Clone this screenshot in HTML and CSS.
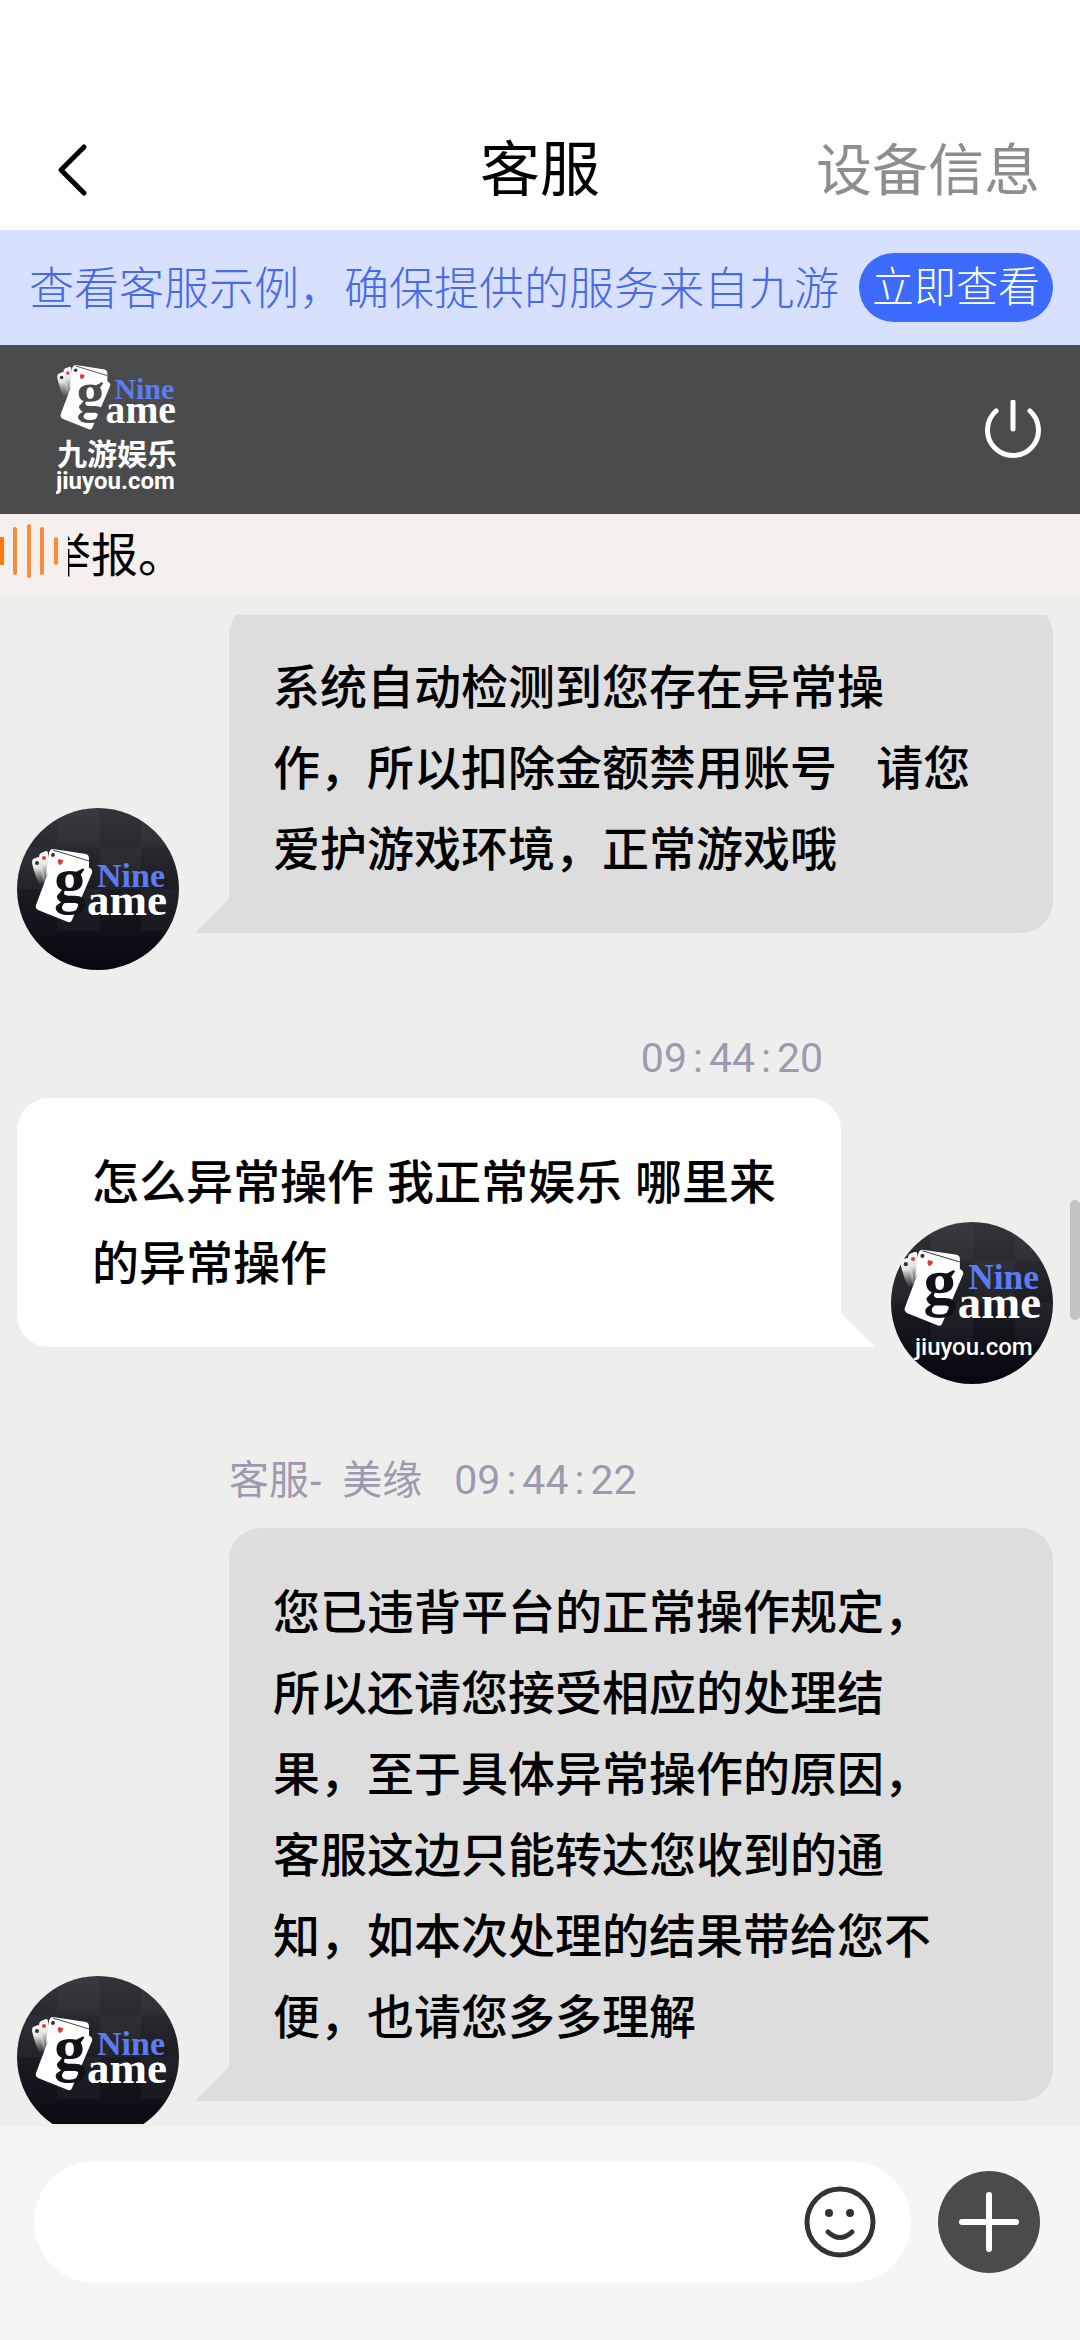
FILE: index.html
```html
<!DOCTYPE html>
<html lang="zh-CN">
<head>
<meta charset="utf-8">
<meta name="viewport" content="width=device-width, initial-scale=1">
<title>客服</title>
<link rel="stylesheet" href="styles.css">
</head>
<body>
<svg class="defs" aria-hidden="true">
  <defs>
    <linearGradient id="night" x1="0" y1="0" x2="0" y2="1">
      <stop offset="0" stop-color="#34353a"/>
      <stop offset="0.5" stop-color="#1c1d22"/>
      <stop offset="1" stop-color="#050610"/>
    </linearGradient>
    <linearGradient id="fade" x1="0" y1="0" x2="0" y2="1">
      <stop offset="0" stop-color="#fff"/>
      <stop offset="0.4" stop-color="#e4e4e4"/>
      <stop offset="1" stop-color="#999" stop-opacity="0.1"/>
    </linearGradient>
    <clipPath id="round"><circle cx="81" cy="81" r="81"/></clipPath>
    <symbol id="tiles" viewBox="0 0 162 162">
      <g clip-path="url(#round)">
        <rect width="162" height="162" fill="url(#night)"/>
        <g fill="#fff" fill-opacity="0.03">
          <path d="M40 0h43v39H40zM124 0h38v39h-38zM0 39h40v42H0zM83 39h41v42H83zM40 81h43v42H40zM124 81h38v42h-38z"/>
        </g>
      </g>
    </symbol>
    <symbol id="cards" overflow="visible">
      <path d="M16 51l5-2q2 0 2 2l6 22-6 4q-5-8-8-22 0-3 1-4z" fill="url(#fade)"/>
      <path d="M24 45l5-2q2 0 2 2l3 18-6 15q-4-10-6-29 0-3 2-4z" fill="url(#fade)"/>
      <circle cx="20" cy="55" r="2" fill="#333"/>
      <circle cx="27" cy="50" r="2" fill="#e23b3b"/>
      <path d="M36 41q-3 0-4 4l-3 23 9-15 34 7 0-10q0-3-3-4z" fill="#fff"/>
      <path d="M36 42l36 11" stroke="#444" stroke-width="1"/>
      <circle cx="36" cy="47" r="2" fill="#333"/>
      <path d="M42 47l31 13q3 2 2 5L55 112q-1 3-4 2L21 102q-3-2-2-5L37 49q2-4 5-2z" fill="#fff"/>
      <path d="M41 52q2-2 3 0 2-1 2 1 0 3-4 4-2-3-1-5z" fill="#e23b3b"/>
    </symbol>
  </defs>
</svg>

<header class="topbar">
  <button class="back" type="button" aria-label="返回">
    <svg viewBox="0 0 40 60" fill="none" stroke="#000" stroke-width="5" stroke-linecap="round" stroke-linejoin="round"><path d="M34 6L11 29l23 23"/></svg>
  </button>
  <h1>客服</h1>
  <a class="device" href="#device">设备信息</a>
</header>

<section class="banner">
  <p>查看客服示例，确保提供的服务来自九游</p>
  <button class="check" type="button">立即查看</button>
</section>

<section class="brand">
  <svg class="logo" viewBox="0 0 122 134" role="img" aria-label="Nine game 九游娱乐">
    <g transform="translate(-12 -34) scale(0.88)">
      <use href="#cards"/>
      <text class="serif g-bar" x="37" y="93">g</text>
      <text class="serif nine" x="80" y="79">Nine</text>
      <text class="serif ame" x="70" y="107">ame</text>
    </g>
    <text class="cn" x="1" y="102">九游娱乐</text>
    <text class="site-bar" x="0" y="126">jiuyou.com</text>
  </svg>
  <button class="power" type="button" aria-label="结束会话">
    <svg viewBox="0 0 60 60" fill="none" stroke="#fff" stroke-width="5" stroke-linecap="round"><path d="M31 2v27M14 11a25.5 25.5 0 1 0 34 0"/></svg>
  </button>
</section>

<section class="notice">
  <svg class="wave" viewBox="0 0 68 84">
    <path d="M0 23h4v28H0z" fill="#ff7a0a"/>
    <path d="M15 15v44M29 12v50M42 15v44M56 25v24" stroke="#f78c3b" stroke-width="4" stroke-linecap="round"/>
  </svg>
  <div class="marquee"><span>举报。</span></div>
</section>

<main class="chat">
  <div class="messages">
    <article class="msg in first">
      <svg class="avatar" viewBox="0 0 162 162">
        <use href="#tiles"/><use href="#cards"/>
        <text class="serif g-dark" x="37" y="93">g</text>
        <text class="serif nine" x="80" y="79">Nine</text>
        <text class="serif ame" x="70" y="107">ame</text>
      </svg>
      <div class="bubble">系统自动检测到您存在异常操作，所以扣除金额禁用账号&nbsp;&nbsp; 请您爱护游戏环境，正常游戏哦</div>
    </article>

    <article class="msg out">
      <div class="meta"><time>09<i>:</i>44<i>:</i>20</time></div>
      <div class="bubble">怎么异常操作 我正常娱乐 哪里来的异常操作</div>
      <svg class="avatar" viewBox="0 0 162 162">
        <use href="#tiles"/>
        <g transform="translate(-6 -15) scale(1.04)">
          <use href="#cards"/>
          <text class="serif g-dark" x="37" y="93">g</text>
          <text class="serif nine" x="80" y="79">Nine</text>
          <text class="serif ame" x="70" y="107">ame</text>
        </g>
        <text class="site" x="24" y="133">jiuyou.com</text>
      </svg>
    </article>

    <article class="msg in">
      <div class="meta"><span>客服-</span><span class="agent">美缘</span><time>09<i>:</i>44<i>:</i>22</time></div>
      <svg class="avatar" viewBox="0 0 162 162">
        <use href="#tiles"/><use href="#cards"/>
        <text class="serif g-dark" x="37" y="93">g</text>
        <text class="serif nine" x="80" y="79">Nine</text>
        <text class="serif ame" x="70" y="107">ame</text>
      </svg>
      <div class="bubble">您已违背平台的正常操作规定，所以还请您接受相应的处理结果，至于具体异常操作的原因，客服这边只能转达您收到的通知，如本次处理的结果带给您不便，也请您多多理解</div>
    </article>
  </div>
  <div class="thumb"></div>
</main>

<form class="composer">
  <div class="field">
    <input type="text" aria-label="输入消息">
    <button class="emoji" type="button" aria-label="表情">
      <svg viewBox="0 0 72 72" fill="none" stroke="#333" stroke-width="5" stroke-linecap="round"><circle cx="36" cy="36" r="33"/><path d="M24 46q12 11 24 0"/><g fill="#333" stroke="none"><circle cx="25" cy="27" r="4"/><circle cx="46" cy="27" r="4"/></g></svg>
    </button>
  </div>
  <button class="plus" type="button" aria-label="更多">
    <svg viewBox="0 0 60 60" stroke="#fff" stroke-width="6" stroke-linecap="round"><path d="M30 3v54M3 30h54"/></svg>
  </button>
</form>
</body>
</html>
```
FILE: styles.css
```css
* { box-sizing: border-box; }

body {
  margin: 0;
  height: 100vh;
  display: flex;
  flex-direction: column;
  background: #eeeeec;
  color: #000;
  font-family: "Liberation Sans", "Noto Sans CJK SC", sans-serif;
}

button {
  border: 0;
  padding: 0;
  background: none;
  font-family: inherit;
  display: flex;
  align-items: center;
  justify-content: center;
}

svg { display: block; }
.defs { width: 0; height: 0; position: absolute; }

.topbar {
  display: grid;
  grid-template-columns: 1fr auto 1fr;
  align-items: center;
  height: 230px;
  padding: 112px 40px 0;
  background: #fff;
}
.back { width: 40px; height: 60px; margin-left: 10px; }
.back svg { width: 40px; height: 60px; }
h1 { margin: 0; font-size: 60px; line-height: 80px; font-weight: 400; }
.device {
  justify-self: end;
  font-size: 56px;
  line-height: 80px;
  color: #8e8e90;
  text-decoration: none;
}

.banner {
  display: flex;
  align-items: center;
  justify-content: space-between;
  height: 115px;
  padding: 0 27px 0 29px;
  background: #d8e0ff;
}
.banner p {
  margin: 0;
  padding-top: 4px;
  font-size: 45px;
  line-height: 60px;
  font-weight: 300;
  color: #466ae6;
  white-space: nowrap;
}
.check {
  width: 194px;
  height: 69px;
  border-radius: 35px;
  background: #3d6bff;
  color: #fff;
  font-size: 42px;
  line-height: 60px;
  font-weight: 300;
}

.brand {
  display: flex;
  align-items: center;
  justify-content: space-between;
  height: 169px;
  padding: 0 38px 0 56px;
  background: #4a4b4d;
}
.logo { width: 122px; height: 134px; }
.power, .power svg { width: 60px; height: 60px; }

.serif { font-family: "Liberation Serif", serif; font-weight: 700; }
.g-bar { font-size: 64px; fill: #4a4b4d; }
.g-dark { font-size: 64px; fill: #111217; }
.nine { font-size: 34px; fill: #5c7df2; }
.ame { font-size: 45px; fill: #fff; }
.cn { font-family: "Noto Sans CJK SC", sans-serif; font-size: 30px; font-weight: 700; fill: #fff; }
.site { font-family: Roboto, sans-serif; font-size: 24px; font-weight: 500; fill: #fff; }
.site-bar { font-family: Roboto, sans-serif; font-size: 24px; font-weight: 700; fill: #fff; }

.notice {
  display: flex;
  height: 84px;
  background: #f5f0ee;
}
.wave { width: 68px; height: 84px; }
.marquee { flex: 1; overflow: hidden; }
.marquee span {
  display: block;
  margin-left: -24px;
  font-size: 47px;
  line-height: 84px;
}

.chat {
  position: relative;
  flex: 1;
  min-height: 0;
  display: flex;
  padding: 17px 0 3px;
}
.messages {
  flex: 1;
  overflow: hidden;
  display: flex;
  flex-direction: column;
  gap: 56px;
  padding: 0 27px 0 17px;
}
.thumb {
  position: absolute;
  right: 0;
  top: 602px;
  width: 10px;
  height: 120px;
  border-radius: 5px;
  background: #c3c3c3;
}

.msg {
  flex: none;
  display: grid;
  column-gap: 50px;
  row-gap: 8px;
}
.in { grid-template-columns: 162px 1fr; }
.out { grid-template-columns: 1fr 162px; }
.first { margin-top: -12px; }

.meta {
  display: flex;
  font-size: 40px;
  line-height: 80px;
  color: #9d9ab0;
}
.in .meta { grid-column: 2; }
.out .meta {
  grid-column: 1;
  justify-content: flex-end;
  padding-right: 18px;
  line-height: 64px;
}
.agent { margin: 0 32px 0 20px; }
time { font-family: Roboto, sans-serif; font-size: 41px; }
time i { font-style: normal; padding: 0 6px; }

.bubble {
  position: relative;
  margin-bottom: 37px;
  padding: 44px 80px 43px 44px;
  border-radius: 32px;
  font-size: 47px;
  line-height: 81px;
  font-weight: 500;
}
.in .bubble { grid-column: 2; background: #ddd; border-bottom-left-radius: 0; }
.out .bubble { grid-column: 1; background: #fff; padding: 44px 44px 43px 75px; border-bottom-right-radius: 0; }
.bubble::after {
  content: "";
  position: absolute;
  bottom: 0;
  width: 34px;
  height: 34px;
  background: inherit;
}
.in .bubble::after { right: 100%; clip-path: polygon(100% 0, 100% 100%, 0 100%); }
.out .bubble::after { left: 100%; clip-path: polygon(0 0, 100% 100%, 0 100%); }

.avatar { width: 162px; height: 162px; align-self: end; }

.composer {
  display: flex;
  align-items: center;
  gap: 27px;
  padding: 34px 40px 57px 34px;
  background: #f5f5f5;
}
.field {
  flex: 1;
  display: flex;
  align-items: center;
  height: 122px;
  padding: 0 35px 0 44px;
  border-radius: 61px;
  background: #fff;
}
.field input {
  flex: 1;
  min-width: 0;
  border: 0;
  outline: 0;
  background: none;
  font-family: inherit;
  font-size: 47px;
}
.emoji, .emoji svg { width: 72px; height: 72px; }
.plus {
  width: 102px;
  height: 102px;
  border-radius: 50%;
  background: #4a4b4d;
}
.plus svg { width: 60px; height: 60px; }
```
